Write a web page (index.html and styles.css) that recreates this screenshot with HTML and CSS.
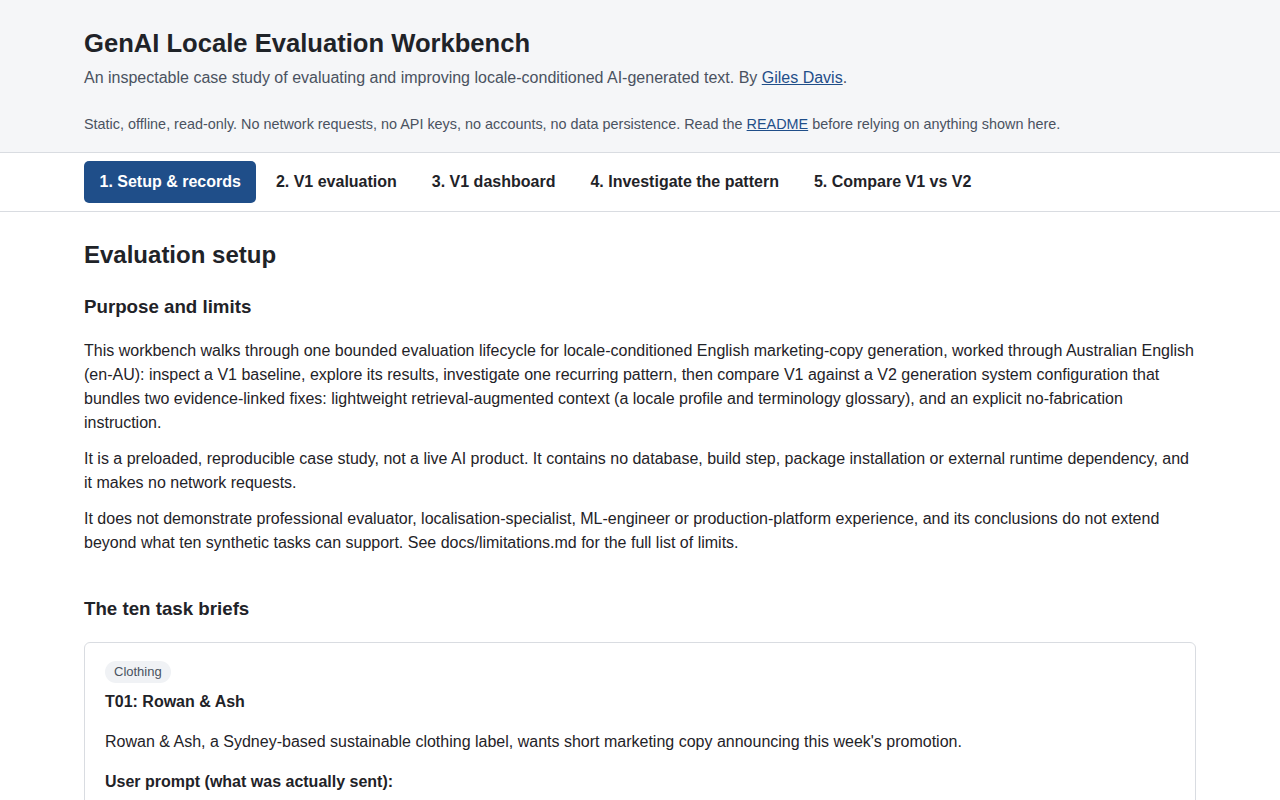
FILE: index.html
```html
<!DOCTYPE html>
<html lang="en">
<head>
	<meta charset="utf-8">
	<title>GenAI Locale Evaluation Workbench</title>
	<link rel="stylesheet" href="styles.css">
</head>
<body>
	<header class="site-header">
		<div class="wrap">
			<h1>GenAI Locale Evaluation Workbench</h1>
			<p class="lede">An inspectable case study of evaluating and improving locale-conditioned AI-generated text. By <a href="#">Giles Davis</a>.</p>
			<p class="note">Static, offline, read-only. No network requests, no API keys, no accounts, no data persistence. Read the <a href="#">README</a> before relying on anything shown here.</p>
		</div>
	</header>
	<nav class="tabs">
		<div class="wrap tab-row">
			<button class="tab active">1. Setup &amp; records</button>
			<button class="tab">2. V1 evaluation</button>
			<button class="tab">3. V1 dashboard</button>
			<button class="tab">4. Investigate the pattern</button>
			<button class="tab">5. Compare V1 vs V2</button>
		</div>
	</nav>
	<main class="wrap">
		<h2>Evaluation setup</h2>

		<section>
			<h3>Purpose and limits</h3>
			<p>This workbench walks through one bounded evaluation lifecycle for locale-conditioned English marketing-copy generation, worked through Australian English (en-AU): inspect a V1 baseline, explore its results, investigate one recurring pattern, then compare V1 against a V2 generation system configuration that bundles two evidence-linked fixes: lightweight retrieval-augmented context (a locale profile and terminology glossary), and an explicit no-fabrication instruction.</p>
			<p>It is a preloaded, reproducible case study, not a live AI product. It contains no database, build step, package installation or external runtime dependency, and it makes no network requests.</p>
			<p>It does not demonstrate professional evaluator, localisation-specialist, ML-engineer or production-platform experience, and its conclusions do not extend beyond what ten synthetic tasks can support. See docs/limitations.md for the full list of limits.</p>
		</section>

		<section>
			<h3 class="briefs-title">The ten task briefs</h3>
			<div class="card">
				<span class="badge">Clothing</span>
				<h4>T01: Rowan &amp; Ash</h4>
				<p>Rowan &amp; Ash, a Sydney-based sustainable clothing label, wants short marketing copy announcing this week's promotion.</p>
				<p class="label">User prompt (what was actually sent):</p>
			</div>
		</section>
	</main>
</body>
</html>
```

FILE: styles.css
```css
* {
	margin: 0;
	padding: 0;
	box-sizing: border-box;
}
body {
	font-family: "Liberation Sans", Arial, sans-serif;
	color: #1f2328;
	background: #fff;
	font-size: 16px;
	line-height: 24px;
}
a {
	color: #1f4e89;
}
.wrap {
	max-width: 1112px;
	margin: 0 auto;
}

.site-header {
	background: #f5f6f8;
	border-bottom: 1px solid #d9dce1;
	padding: 26px 0 17px;
}
.site-header h1 {
	font-size: 25.6px;
	line-height: 34px;
	font-weight: bold;
	color: #1f2328;
}
.site-header .lede {
	margin-top: 5px;
	font-size: 16px;
	line-height: 26px;
	color: #4a5260;
}
.site-header .note {
	margin-top: 22px;
	font-size: 14.4px;
	line-height: 22px;
	color: #4a5260;
}

.tabs {
	border-bottom: 1px solid #d9dce1;
	padding: 8px 0;
}
.tab-row {
	display: flex;
	gap: 4px;
}
.tab {
	font-family: "Liberation Sans", Arial, sans-serif;
	font-size: 16px;
	font-weight: bold;
	color: #1f2328;
	background: none;
	border: none;
	border-radius: 5px;
	height: 42px;
	padding: 0 15.5px;
	cursor: pointer;
}
.tab.active {
	background: #1f4e89;
	color: #fff;
}

main {
	padding: 28px 0 40px;
}
main h2 {
	font-size: 24px;
	line-height: 30px;
	font-weight: bold;
}
main h3 {
	font-size: 18.72px;
	line-height: 24px;
	font-weight: bold;
	margin: 25px 0 20px;
}
main p {
	margin-bottom: 12px;
}
.briefs-title {
	margin-top: 42px;
	margin-bottom: 21px;
}

.card {
	border: 1px solid #d9dce1;
	border-radius: 6px;
	padding: 16px 20px;
}
.badge {
	display: inline-block;
	background: #f0f2f5;
	color: #4a5260;
	font-size: 13px;
	line-height: 22px;
	padding: 0 9px;
	border-radius: 11px;
}
.card h4 {
	font-size: 16px;
	line-height: 24px;
	margin: 7px 0 16px;
}
.card p {
	margin-bottom: 16px;
}
.card .label {
	font-weight: bold;
	font-size: 16px;
}
```
